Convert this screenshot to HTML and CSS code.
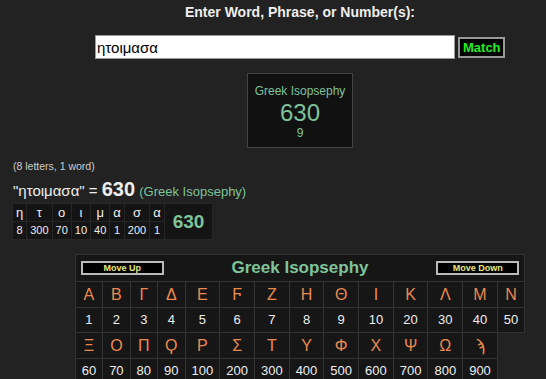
FILE: index.html
```html
<!DOCTYPE html>
<html>

<head>
  <meta charset="UTF-8">
  <title>Greek Isopsephy</title>
  <link rel="stylesheet" href="styles.css">
</head>

<body>
  <div class="page">
    <h1 class="prompt">Enter Word, Phrase, or Number(s):</h1>

    <form class="search">
      <input class="search-input" type="text" value="ητοιμασα">
      <button class="match" type="button">Match</button>
    </form>

    <div class="score-box">
      <div class="score-name">Greek Isopsephy</div>
      <div class="score-value">630</div>
      <div class="score-sum">9</div>
    </div>

    <div class="count">(8 letters, 1 word)</div>

    <div class="summary">
      "ητοιμασα" = <strong>630</strong> <span class="summary-cipher">(Greek Isopsephy)</span>
    </div>

    <table class="breakdown">
      <tr class="breakdown-letters">
        <td>η</td><td>τ</td><td>ο</td><td>ι</td><td>μ</td><td>α</td><td>σ</td><td>α</td>
        <td class="breakdown-total" rowspan="2">630</td>
      </tr>
      <tr class="breakdown-values">
        <td>8</td><td>300</td><td>70</td><td>10</td><td>40</td><td>1</td><td>200</td><td>1</td>
      </tr>
    </table>

    <table class="cipher">
      <tr>
        <th class="cipher-head" colspan="14">
          <div class="cipher-bar">
            <button class="move" type="button">Move Up</button>
            <span class="cipher-title">Greek Isopsephy</span>
            <button class="move" type="button">Move Down</button>
          </div>
        </th>
      </tr>
      <tr class="letters">
        <td>Α</td><td>Β</td><td>Γ</td><td>Δ</td><td>Ε</td><td>Ϝ</td><td>Ζ</td>
        <td>Η</td><td>Θ</td><td>Ι</td><td>Κ</td><td>Λ</td><td>Μ</td><td>Ν</td>
      </tr>
      <tr class="values">
        <td>1</td><td>2</td><td>3</td><td>4</td><td>5</td><td>6</td><td>7</td>
        <td>8</td><td>9</td><td>10</td><td>20</td><td>30</td><td>40</td><td>50</td>
      </tr>
      <tr class="letters">
        <td>Ξ</td><td>Ο</td><td>Π</td><td>Ϙ</td><td>Ρ</td><td>Σ</td><td>Τ</td>
        <td>Υ</td><td>Φ</td><td>Χ</td><td>Ψ</td><td>Ω</td><td>ϡ</td>
      </tr>
      <tr class="values">
        <td>60</td><td>70</td><td>80</td><td>90</td><td>100</td><td>200</td><td>300</td>
        <td>400</td><td>500</td><td>600</td><td>700</td><td>800</td><td>900</td>
      </tr>
    </table>
  </div>
</body>

</html>
```

FILE: styles.css
```css
html {
  overflow: hidden;
}

body {
  background: #222;
  color: #eee;
  font-family: "Liberation Sans", Arial, sans-serif;
  margin: 0;
}

.page {
  width: 600px;
}

.prompt {
  font-size: 14px;
  line-height: 16px;
  margin: 4px 0 0;
  text-align: center;
}

.search {
  align-items: center;
  display: flex;
  gap: 3px;
  justify-content: center;
  margin: 15px 0 0;
}

.search-input {
  background: #fff;
  border: 1px solid #999;
  box-sizing: border-box;
  color: #000;
  font-family: "Liberation Sans", Arial, sans-serif;
  font-size: 15px;
  height: 24px;
  margin: 0;
  padding: 0 1px;
  width: 360px;
}

.match {
  background: #000;
  border: 2px solid #999;
  box-sizing: border-box;
  color: #22ee22;
  font-family: "Liberation Sans", Arial, sans-serif;
  font-size: 13px;
  font-weight: bold;
  height: 21px;
  margin: 0;
  padding: 0 3px;
  width: 47px;
}

.score-box {
  background: #111;
  border: 1px solid #444;
  box-sizing: border-box;
  height: 75px;
  margin: 14px auto 0;
  padding-top: 10px;
  text-align: center;
  width: 106px;
}

.score-name {
  color: #7ec39a;
  font-size: 12px;
  line-height: 14px;
}

.score-value {
  color: #7ec39a;
  font-size: 24px;
  line-height: 26px;
  margin-top: 2px;
}

.score-sum {
  color: #7ec39a;
  font-size: 12px;
  line-height: 14px;
}

.count {
  color: #ccc;
  font-size: 10.5px;
  line-height: 12px;
  margin: 12px 0 0 13px;
}

.summary {
  font-size: 15px;
  line-height: 20px;
  margin: 7px 0 0 13px;
}

.summary strong {
  font-size: 20px;
}

.summary-cipher {
  color: #7ec39a;
  font-size: 13px;
}

.breakdown {
  background: #262626;
  border-spacing: 1px;
  margin: 1px 0 0 12px;
}

.breakdown td {
  background: #141414;
  padding: 0 3px;
  text-align: center;
}

.breakdown-letters td {
  font-size: 13px;
  line-height: 17px;
}

.breakdown-values td {
  font-size: 11px;
  line-height: 17px;
}

.breakdown .breakdown-total {
  color: #7ec39a;
  font-size: 19px;
  font-weight: bold;
  padding: 0 8px;
}

.cipher {
  border-collapse: collapse;
  margin: 14px auto 0;
}

.cipher td,
.cipher th {
  background: #161616;
  border: 1px solid #333;
  text-align: center;
}

.cipher td {
  padding: 4px 6px;
}

.cipher-head {
  padding: 3px 5px;
}

.cipher-bar {
  align-items: center;
  display: flex;
  justify-content: space-between;
}

.cipher-title {
  color: #7ec39a;
  font-size: 17px;
  line-height: 20px;
}

.move {
  background: #000;
  border: 2px solid #bbb;
  box-sizing: border-box;
  color: #e8e87a;
  font-family: "Liberation Sans", Arial, sans-serif;
  font-size: 9px;
  font-weight: bold;
  height: 14px;
  line-height: 10px;
  margin: 0;
  padding: 0;
  width: 83px;
}

.letters td {
  color: #ea8a4f;
  font-size: 16px;
  line-height: 17px;
}

.values td {
  color: #eee;
  font-size: 13px;
  line-height: 16px;
}
```
